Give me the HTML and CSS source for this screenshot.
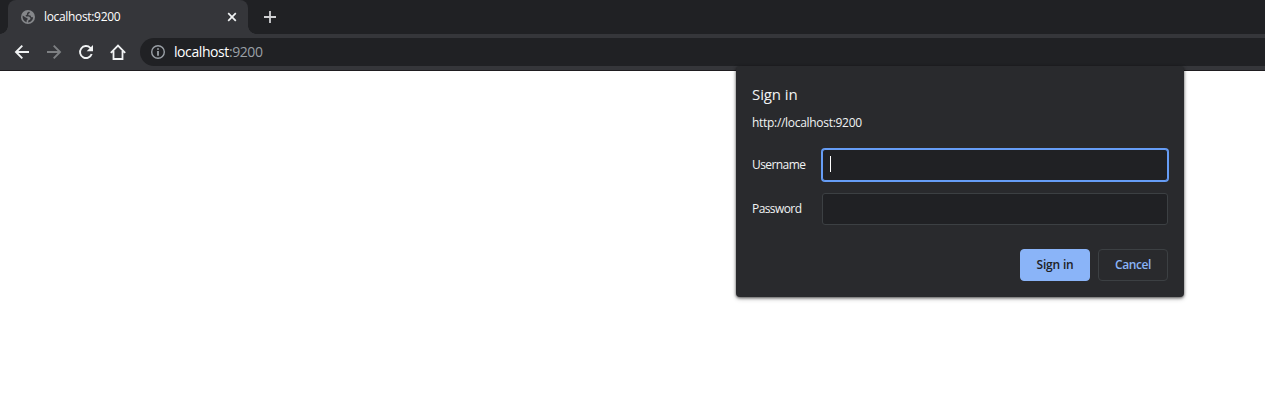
FILE: index.html
```html
<!DOCTYPE html>
<html lang="en">
<head>
<meta charset="utf-8">
<title>localhost:9200</title>
<link rel="stylesheet" href="styles.css">
</head>
<body>
<header class="browser">
  <div class="tabstrip">
    <div class="tab">
      <svg class="globe" width="14" height="14" viewBox="0 0 14 14"><circle cx="7" cy="7" r="7" fill="#85878a"/><path d="M8 1.500 6 3v1.500L4.500 5.500l.5 1h3l1.500 1.500-.3 1.400-1.700.8-.5 2.200c2.800-.2 5-2.500 5.100-5.200H10.300L9.500 5.500 7.500 5.200 7.300 4 9 2.800zM1.700 5.600c-.6 3.200 1.200 5.800 3.900 6.700V10.500l1.100-1.200-.2-1L4.700 7.600z" fill="#35363a"/></svg>
      <span class="tab-title">localhost:9200</span>
      <svg class="close" width="10" height="10" viewBox="0 0 10 10"><path d="M1.200 1.200 8.800 8.800M8.800 1.200 1.200 8.800" stroke="#f1f3f4" stroke-width="1.700"/></svg>
    </div>
    <svg class="plus" width="14" height="14" viewBox="0 0 14 14"><path d="M7 1v12M1 7h12" stroke="#d0d1d3" stroke-width="1.800"/></svg>
  </div>
  <nav class="toolbar">
    <svg class="nav" width="16" height="16" viewBox="0 0 16 16"><path d="M15 8H2.500M8.300 1.700 2 8l6.300 6.300" fill="none" stroke="#f1f3f4" stroke-width="1.900"/></svg>
    <svg class="nav" width="16" height="16" viewBox="0 0 16 16"><path d="M1 8h12.500M7.700 1.700 14 8l-6.300 6.300" fill="none" stroke="#7e8083" stroke-width="1.900"/></svg>
    <svg class="nav" width="16" height="16" viewBox="0 0 16 16"><path d="M13.700 10A6 6 0 1 1 12.300 3.800L13 4.500" fill="none" stroke="#f1f3f4" stroke-width="1.900"/><path d="M15 .9v6.300H8.700z" fill="#f1f3f4"/></svg>
    <svg class="nav" width="16" height="16" viewBox="0 0 16 16"><path d="M.8 8.800 8 1.600l7.200 7.200M3.500 7v8h9V7" fill="none" stroke="#f1f3f4" stroke-width="1.800"/></svg>
    <div class="omnibox">
      <svg class="info" width="14" height="14" viewBox="0 0 14 14"><circle cx="7" cy="7" r="6.300" fill="none" stroke="#9aa0a6" stroke-width="1.400"/><path d="M7 3.200v1.600M7 6v4.700" stroke="#9aa0a6" stroke-width="1.800"/></svg>
      <span class="url">localhost<span class="port">:9200</span></span>
    </div>
  </nav>
</header>
<form class="dialog">
  <h1 class="heading">Sign in</h1>
  <p class="origin">http://localhost:9200</p>
  <div class="row">
    <span class="label">Username</span>
    <div class="field focused"><span class="caret"></span></div>
  </div>
  <div class="row">
    <span class="label">Password</span>
    <div class="field"></div>
  </div>
  <div class="actions">
    <button type="button" class="btn primary">Sign in</button>
    <button type="button" class="btn secondary">Cancel</button>
  </div>
</form>
</body>
</html>
```
FILE: styles.css
```css
* { box-sizing: border-box; }
body { margin: 0; height: 400px; overflow: hidden; background: #fff; font: 12px/16px "Open Sans", "Noto Sans", sans-serif; color: #f1f3f4; }
svg { display: block; flex: none; }
.browser { height: 71px; background: #35363a; border-bottom: 1px solid #1f1d20; }
.tabstrip { display: flex; height: 34px; padding-left: 8px; background: #202124; }
.tab { position: relative; display: flex; align-items: center; width: 240px; height: 34px; padding: 0 11px 0 13px; background: #35363a; border-radius: 8px 8px 0 0; }
.tab::before, .tab::after { content: ""; position: absolute; bottom: 0; width: 8px; height: 8px; }
.tab::before { left: -8px; background: radial-gradient(circle at 0 0, #202124 7.500px, #35363a 8px); }
.tab::after { right: -8px; background: radial-gradient(circle at 100% 0, #202124 7.500px, #35363a 8px); }
.tab-title { flex: 1; margin-left: 9px; letter-spacing: -0.330px; color: #fff; }
.plus { margin: 10px 0 0 15px; }
.toolbar { display: flex; align-items: center; height: 36px; padding-left: 14px; }
.nav { margin-right: 16px; }
.omnibox { display: flex; align-items: center; flex: 1; height: 28px; margin-left: -2px; padding-left: 11px; background: #202124; border-radius: 14px 0 0 14px; }
.url { margin-left: 9px; font-size: 14px; letter-spacing: -0.420px; color: #fff; }
.port { color: #9aa0a6; }
.dialog { position: absolute; left: 736px; top: 66px; width: 448px; height: 231px; padding: 19px 16px 16px; background: #292a2d; border-radius: 4px; box-shadow: 0 1px 3px rgba(0,0,0,.6), 0 2px 5px rgba(0,0,0,.2); }
.heading { margin: 0; font-size: 15px; line-height: 18px; font-weight: 400; letter-spacing: -0.100px; }
.origin { margin: 12px 0 18px; letter-spacing: -0.300px; }
.row { display: flex; align-items: center; height: 32px; margin-bottom: 12px; }
.label { width: 70px; letter-spacing: -0.580px; }
.field { display: flex; align-items: center; width: 346px; height: 32px; background: #202124; border: 1px solid #3c4043; border-radius: 3px; }
.focused { border-color: #669df6; box-shadow: 0 0 0 1px #669df6; }
.caret { width: 1px; height: 16px; margin: 0 0 2px 7px; background: #fff; }
.actions { display: flex; justify-content: flex-end; gap: 8px; padding-top: 12px; }
.btn { width: 70px; height: 32px; padding: 0; border: 1px solid #3c4043; border-radius: 4px; font: 600 12px/16px "Open Sans", "Noto Sans", sans-serif; letter-spacing: -0.400px; }
.primary { background: #8ab4f8; border-color: #8ab4f8; color: #202124; letter-spacing: -0.200px; }
.secondary { background: transparent; color: #8ab4f8; }
```
